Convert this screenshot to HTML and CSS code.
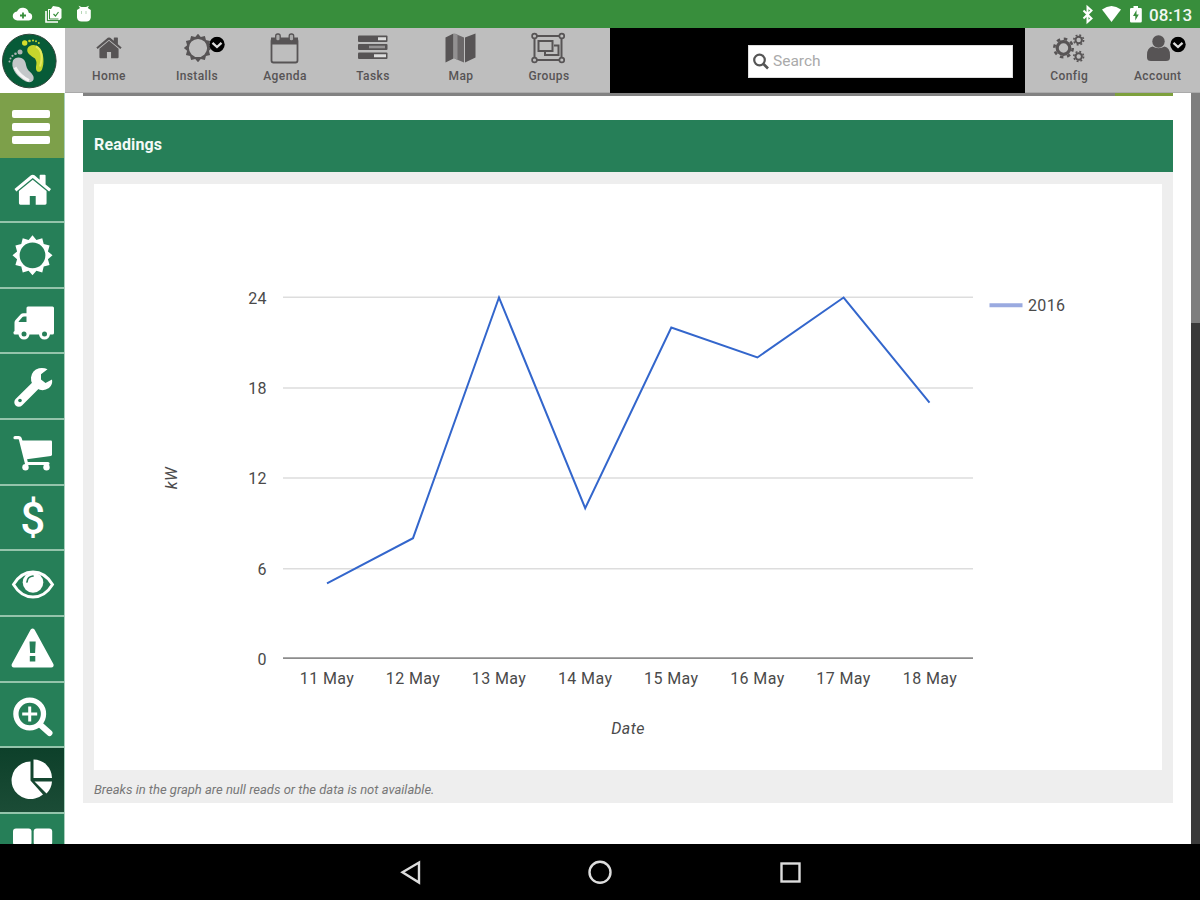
FILE: index.html
```
<!DOCTYPE html>
<html lang="en">
<head>
<meta charset="utf-8">
<title>Readings</title>
<link rel="stylesheet" href="styles.css">
</head>
<body>
<svg class="defs" width="0" height="0">
  <symbol id="sun" viewBox="-21 -21 42 42"><path fill-rule="evenodd" d="M0-20.5 4-15.8 10-17.5 11.5-11.5 17.5-10 15.8-4 20.5 0 15.8 4 17.5 10 11.5 11.5 10 17.5 4 15.8 0 20.5-4 15.8-10 17.5-11.5 11.5-17.5 10-15.8 4-20.5 0-15.8-4-17.5-10-11.5-11.5-10-17.5-4-15.8ZM-13.2 0a13.2 13.2 0 1 0 26.4 0a13.2 13.2 0 1 0-26.4 0Z"/></symbol>
  <symbol id="house" viewBox="0 0 38 32"><path d="M19 5.5 33 17v12.500q0 1.500-1.500 1.500H22V22h-6v9H6.500q-1.500 0-1.500-1.500V17Z"/><path d="M19 .5q1 0 1.800.6L26 5.500V1.300q0-.8.8-.8h4.400q.8 0 .8.800V10.500l5.500 4.600-1.900 2.500L19 3.900 2.400 17.600.5 15.100 17.200 1.100Q18 .5 19 .5Z"/></symbol>
  <symbol id="drop" viewBox="0 0 16 16"><circle cx="8" cy="8" r="7.700" fill="#000"/><path d="m3.500 6.300 4.500 4.200 4.500-4.200" fill="none" stroke="#ddd" stroke-width="2.300"/></symbol>
</svg>

<header class="status">
  <svg width="100" height="28" viewBox="0 0 100 28" fill="#fff">
    <path d="M17.500 20.500a4.500 4.500 0 0 1-.5-9 6.200 6.200 0 0 1 11.800 1.300 3.900 3.900 0 0 1 .2 7.700Z"/>
    <path d="M23 12.500v6M20 15.500h6" stroke="#388e3c" stroke-width="1.800"/>
    <path d="M48 9h3l2-3 6 1 2.500 2v9l-2 2H48Z"/><path d="M46 11v11h12" fill="none" stroke="#fff" stroke-width="1.600"/>
    <path d="M49.500 10v9h9" fill="none" stroke="#388e3c" stroke-width="1"/><path d="m53.500 14 2 2 3-4" fill="none" stroke="#388e3c" stroke-width="1.200"/>
    <path d="M77 10 80 8l-1.500-2.300 3 1.300h4.500l3-1.300L87.800 8l3 2v7.500q-.5 4-4.300 4h-5q-4 0-4.500-4Z"/><path d="M81.500 11v3M86 11v3" stroke="#b5d6b6" stroke-width="1"/>
  </svg>
  <div class="status-right">
    <svg width="68" height="28" viewBox="1081 0 68 28" fill="#fff">
      <path d="m1083.500 10.500 8 8-4 3.500V7l4 3.500-8 8" fill="none" stroke="#fff" stroke-width="2"/>
      <path d="M1102 9.500Q1111.500 2.500 1121 9.500L1111.500 22Z"/>
      <path fill-rule="evenodd" d="M1133.500 6h4.500v2h2.500q1.300 0 1.300 1.300v12q0 1.300-1.300 1.300h-9.200q-1.300 0-1.300-1.300v-12q0-1.300 1.300-1.300h2.200ZM1136.500 10l-3.500 6h2.300v4.500l3.500-6h-2.300Z"/>
    </svg>
    <span class="clock">08:13</span>
  </div>
</header>

<div class="topbar">
  <div class="logo">
    <svg width="64" height="65" viewBox="0 28.500 64 65">
      <circle cx="29.300" cy="61.500" r="26.800" fill="#075b38" stroke="#30463b" stroke-width="1"/>
      <path d="M27.500 49c2-4 8-5 12.500 0 4 5 4.500 15 2 21-1.500 3.500-6 3-6-1 0-4 1.500-6-1-10-4-3-9-5-7.500-10Z" fill="#c5d62d"/>
      <path d="M36 47c6 3 7 11 4 20" fill="none" stroke="#e5e95e" stroke-width="2"/>
      <circle cx="24.700" cy="43.500" r="2.700" fill="#d7de2b"/><circle cx="29.500" cy="41.500" r="1.300" fill="#c5d62d"/><circle cx="33" cy="41" r="1.100" fill="#c5d62d"/><circle cx="36" cy="41.700" r="1" fill="#c5d62d"/><circle cx="38.800" cy="43.500" r="1" fill="#c5d62d"/>
      <path d="M13 61c2-4 9-4 11.500 0 2 3 1 6 4 10 3 3 6 5 5 9-1.500 4-7 3-11 0-7-5-12-12-9.500-19Z" fill="#c3c7c9"/>
      <path d="M15 68q5 9 14 13" fill="none" stroke="#f4f4f4" stroke-width="3"/>
      <circle cx="20" cy="52.500" r="2.500" fill="#aeb4b4"/><circle cx="15.500" cy="54.300" r="1.300" fill="#aeb4b4"/><circle cx="12.500" cy="56.300" r="1.100" fill="#aeb4b4"/><circle cx="10.500" cy="59" r="1" fill="#aeb4b4"/><circle cx="9.500" cy="62" r="1" fill="#aeb4b4"/>
    </svg>
  </div>
  <nav class="tabs">
    <a class="tab"><svg viewBox="65 30.500 88 38"><use href="#house" x="96" y="37" width="26" height="23"/></svg><span>Home</span></a>
    <a class="tab"><svg viewBox="153 30.500 88 38"><use href="#sun" x="183.500" y="34" width="29" height="29"/><use href="#drop" x="209" y="37" width="16" height="16"/></svg><span>Installs</span></a>
    <a class="tab"><svg viewBox="241 30.500 88 38"><rect x="271.500" y="39.500" width="26" height="23.500" rx="2" fill="none" stroke="#575455" stroke-width="1.800"/><path d="M271 38h27v7h-27z"/><rect x="275.700" y="34.500" width="4.500" height="7" rx="2" fill="#aaa" stroke="#575455" stroke-width="1.300"/><rect x="289.200" y="34.500" width="4.500" height="7" rx="2" fill="#aaa" stroke="#575455" stroke-width="1.300"/></svg><span>Agenda</span></a>
    <a class="tab"><svg viewBox="329 30.500 88 38"><rect x="358" y="36" width="29.500" height="6.500" rx="1"/><rect x="358" y="44.500" width="29.500" height="6" rx="1"/><rect x="358" y="53" width="29.500" height="6.500" rx="1"/><path d="M378 37.700h8v3h-8zM374 54.700h12v3h-12z" fill="#ddd"/><path d="M369 46.200h16v2.600h-16z" fill="#959394"/></svg><span>Tasks</span></a>
    <a class="tab"><svg viewBox="417 30.500 88 38"><path d="m445.500 38 8-4v25l-8 4ZM465 38l0 25 10.500-5V34Z"/><path d="m454.500 34 9.500 4v25l-9.500-4Z" fill="#6b6869"/><path d="m454.500 34 3 1.300v25l-3-1.300Z" fill="#929091"/></svg><span>Map</span></a>
    <a class="tab"><svg viewBox="505 30.500 88 38" fill="none" stroke="#575455"><path d="M534.500 36.500h27v24h-27z" stroke-width="2"/><rect x="538.500" y="41.500" width="14" height="10" stroke-width="2"/><path d="M554 46h4.500v9.500H545V52" stroke-width="2"/><g fill="#bebebe" stroke-width="1.700"><circle cx="534.500" cy="36.500" r="2.400"/><circle cx="561.800" cy="36.500" r="2.400"/><circle cx="534.500" cy="60.500" r="2.400"/><circle cx="561.800" cy="60.500" r="2.400"/></g></svg><span>Groups</span></a>
  </nav>
  <div class="search-area">
    <div class="search"><svg width="17" height="18" viewBox="0.500 0.500 17 18"><circle cx="7" cy="7.500" r="5.300" fill="none" stroke="#555" stroke-width="2.200"/><path d="m11 11.500 4.500 4.500" stroke="#555" stroke-width="2.600"/></svg><span>Search</span></div>
  </div>
  <nav class="tabs account">
    <a class="tab"><svg viewBox="1025 30.500 88 38" fill="none" stroke="#575455"><circle cx="1063.500" cy="48.500" r="6.300" stroke-width="3.200"/><circle cx="1063.500" cy="48.500" r="9.200" stroke-width="2.600" stroke-dasharray="3.500 3.725"/><circle cx="1078.700" cy="40.500" r="3.200" stroke-width="2"/><circle cx="1078.700" cy="40.500" r="4.900" stroke-width="1.600" stroke-dasharray="1.900 1.950"/><circle cx="1078.700" cy="57" r="3.200" stroke-width="2"/><circle cx="1078.700" cy="57" r="4.900" stroke-width="1.600" stroke-dasharray="1.900 1.950"/></svg><span>Config</span></a>
    <a class="tab"><svg viewBox="1113 30.500 88 38"><circle cx="1157.500" cy="42" r="6.200"/><path d="M1151.500 47q6 3.600 12 0 5.500 1 5.500 8.500v2.500q0 3.500-4 3.500h-15q-4 0-4-3.500V55.500q0-7.500 5.500-8.500Z"/><use href="#drop" x="1169" y="37" width="16" height="16"/></svg><span>Account</span></a>
  </nav>
</div>

<div class="body">
  <aside class="side">
    <a class="menu"><i></i><i></i><i></i></a>
    <a class="item"><svg viewBox="0 0 64 64"><use href="#house" x="14" y="16" width="37.500" height="32"/></svg></a>
    <a class="item"><svg viewBox="0 0 64 64"><use href="#sun" x="12" y="11.800" width="41" height="41"/></svg></a>
    <a class="item"><svg viewBox="0 0 64 64"><path fill-rule="evenodd" d="M28 17.500h24.500q1.500 0 1.500 1.500v25q0 1.500-1.500 1.500H15q-1.500 0-1.500-1.500V43l1-1v-8.500q0-1.500 1-2.500l5-5.500q1.200-1.200 3-1.200H26.500V19q0-1.500 1.500-1.500ZM18.500 33H26.500v-5.500H24q-1 0-1.500.6l-3.500 3.900Z"/><circle cx="24" cy="45" r="5.500"/><circle cx="44.500" cy="45" r="5.500"/><g fill="#267f58"><circle cx="24" cy="45" r="2.500"/><circle cx="44.500" cy="45" r="2.500"/></g></svg></a>
    <a class="item"><svg viewBox="0 0 64 64"><path d="M18.800 48.300 35.500 31.600" stroke="#fff" stroke-width="9" stroke-linecap="round"/><path d="M47.500 15.300 41 20.300v5.200l4.500 3.500L52 25.500q1 5-3 8.500-6 4-12 .5-6.500-4-6-11 1-7.500 8-9.300 5-.8 8.500 1.100Z"/><circle cx="20" cy="46.500" r="1.800" fill="#267f58"/></svg></a>
    <a class="item"><svg viewBox="0 0 64 64"><path d="M21.500 20.500H51q1 0 1 1v13q0 1.200-1.200 1.400L25 39.500Z"/><path d="M15 17.700h3.500q1.500 0 2 2L26.500 43.500H48" fill="none" stroke="#fff" stroke-width="3.200" stroke-linecap="round"/><circle cx="25.500" cy="47.200" r="3.200"/><circle cx="46.500" cy="47.200" r="3.200"/></svg></a>
    <a class="item"><svg viewBox="0 0 64 64"><text class="dollar" x="32.700" y="48" text-anchor="middle">$</text></svg></a>
    <a class="item"><svg viewBox="0 0 64 64"><path d="M13.500 33.500Q21 21 33 21T52.500 33.500Q45 46 33 46T13.500 33.500Z" fill="none" stroke="#fff" stroke-width="2.900"/><circle cx="33" cy="31.500" r="10.300"/><path d="M27 31q.5-5.500 6-6" fill="none" stroke="#267f58" stroke-width="1.700" stroke-linecap="round"/></svg></a>
    <a class="item"><svg viewBox="0 0 64 64"><path fill-rule="evenodd" d="M30.700 12.500q1.900-2 3.800 0L53.500 47.300q.8 2.900-2.300 3.200H14q-3-.3-2.300-3.200ZM29.500 24.500l.6 11.500h5l.6-11.500ZM29.800 39v5.500h5.500V39Z"/></svg></a>
    <a class="item"><svg viewBox="0 0 64 64" fill="none" stroke="#fff"><circle cx="29.700" cy="31" r="13.800" stroke-width="5.300"/><path d="m40.500 42 9 8" stroke-width="6" stroke-linecap="round"/><path d="M29.700 23.500v15M22.200 31h15" stroke-width="3"/></svg></a>
    <a class="item active"><svg viewBox="0 0 64 64"><path d="M30.500 13.500V32.500L43 46.500A19 18.800 0 1 1 30.500 13.500Z"/><path d="M33.500 11.500A18.500 18.500 0 0 1 52 30H33.500Z"/><path d="M34.500 33.500H52Q51.500 40.500 46.500 45.500Z"/></svg></a>
    <a class="item"><svg viewBox="0 0 64 64"><rect x="13" y="14.500" width="18.500" height="17" rx="3"/><rect x="33.700" y="14.500" width="18.500" height="17" rx="3"/></svg></a>
  </aside>

  <main class="content">
    <div class="strip"><i></i></div>
    <section class="panel">
      <h2>Readings</h2>
      <div class="panel-body">
        <svg class="chart" width="1068" height="586" viewBox="94 184 1068 586">
          <path d="M283 297.300h690M283 388h690M283 478h690M283 568.700h690" stroke="#ddd" stroke-width="1.600"/>
          <path d="M283 658.200h690" stroke="#8c8c8c" stroke-width="1.700"/>
          <path d="M327 583.300 413 538.200 499 297.500 585.200 508.200 671.300 327.600 757.400 357.500 843.600 297.500 929.500 402.700" fill="none" stroke="#3366cc" stroke-width="2"/>
          <path d="M989.500 305.300h33" stroke="#9aaae0" stroke-width="4"/>
          <text x="1028" y="311" textLength="37.500">2016</text>
          <g class="ylab"><text x="267" y="303.500">24</text><text x="267" y="394">18</text><text x="267" y="484">12</text><text x="267" y="574.500">6</text><text x="267" y="664.500">0</text></g>
          <g class="xlab"><text x="327" y="684">11 May</text><text x="413" y="684">12 May</text><text x="499" y="684">13 May</text><text x="585.200" y="684">14 May</text><text x="671.300" y="684">15 May</text><text x="757.400" y="684">16 May</text><text x="843.600" y="684">17 May</text><text x="930" y="684">18 May</text></g>
          <text class="axis" x="628" y="734">Date</text>
          <text class="axis" transform="translate(177 478) rotate(-90)">kW</text>
        </svg>
        <p>Breaks in the graph are null reads or the data is not available.</p>
      </div>
    </section>
  </main>
  <div class="scroll"><i></i></div>
</div>

<footer class="nav">
  <svg width="24" height="26" viewBox="0 0 24 26"><path d="M21 3.500v20L4.500 13.300Z"/></svg>
  <svg width="26" height="26" viewBox="0 0 26 26"><circle cx="13" cy="13.300" r="10.500"/></svg>
  <svg width="24" height="26" viewBox="0 0 24 26"><rect x="3.500" y="4.500" width="18" height="18"/></svg>
</footer>
</body>
</html>
```

FILE: styles.css
```
* { box-sizing: border-box; }
body { margin: 0; width: 1200px; height: 900px; overflow: hidden; display: flex; flex-direction: column; background: #fff; font-family: Roboto, "Liberation Sans", sans-serif; }
svg { display: block; }
.defs { position: absolute; }

.status { height: 28px; flex: none; background: #388e3c; display: flex; justify-content: space-between; }
.status-right { display: flex; align-items: center; padding-right: 8px; }
.clock { color: #f2f8f2; font-size: 17px; font-weight: 500; line-height: 28px; width: 43px; padding-top: 2px; }

.topbar { height: 65px; flex: none; display: flex; background: #000; position: relative; }
.logo { width: 65px; flex: none; background: #fff; }
.tabs { width: 545px; height: 65px; flex: none; display: flex; background: #bebebe; border-bottom: 1px solid #aaa; }
.tabs.account { width: 175px; }
.tab { width: 88px; flex: none; display: flex; flex-direction: column; align-items: center; padding-top: 2px; color: #575455; fill: #575455; font-size: 12px; font-weight: 500; letter-spacing: .4px; }
.tabs.account .tab { width: 88.500px; }
.tab svg { width: 88px; height: 38px; }
.tab span { line-height: 17px; }
.search-area { flex: 1; padding: 17px 12px 0 138px; }
.search { height: 33px; background: #fff; display: flex; align-items: center; gap: 3px; padding-left: 4px; color: #aaa; font-size: 15.500px; border: 1px solid #ddd; }
.search span { padding-bottom: 2px; }

.body { height: 751px; flex: none; display: flex; overflow: hidden; }
.side { width: 65px; flex: none; background: #267f58; border-right: 1.500px solid #a9cfbd; fill: #fff; }
.menu { height: 64.500px; background: #7da04a; display: flex; flex-direction: column; gap: 5.500px; padding: 17px 14px 0 12px; }
.menu i { height: 7.500px; background: #fff; border-radius: 2px; }
.item { display: block; height: 65.650px; border-bottom: 2px solid #94c4ab; overflow: hidden; }
.item svg { width: 64px; height: 64px; }
.item.active { background: linear-gradient(#0d402a, #1b4c36); }
.dollar { font-size: 44px; font-weight: 500; }

.content { flex: 1; padding: 0 18px; }
.strip { height: 3px; background: #828282; }
.strip i { display: block; width: 58px; height: 100%; margin-left: auto; background: #7da03c; }
.panel { margin-top: 24px; background: #eee; height: 683px; }
.panel h2 { margin: 0; height: 52px; padding-left: 11px; background: #267f58; color: #f4faf7; font-size: 16px; font-weight: 700; line-height: 50px; letter-spacing: .15px; }
.panel-body { padding: 12px 11px 0; }
.chart { background: #fff; font-size: 16px; fill: #444; letter-spacing: .4px; }
.chart text { fill: #4a4a4a; }
.ylab { text-anchor: end; }
.xlab, .axis { text-anchor: middle; }
.axis { font-style: italic; }
.panel p { margin: 12px 0 0; font-size: 13px; font-style: italic; line-height: 16px; color: #777; }

.scroll { width: 9px; flex: none; background: #3a3a3a; }
.scroll i { display: block; height: 230px; background: #7e7e7e; }

.nav { height: 56px; flex: none; background: #000; display: flex; justify-content: center; align-items: center; gap: 165px; fill: none; stroke: #ddd; stroke-width: 2.400px; }
```
